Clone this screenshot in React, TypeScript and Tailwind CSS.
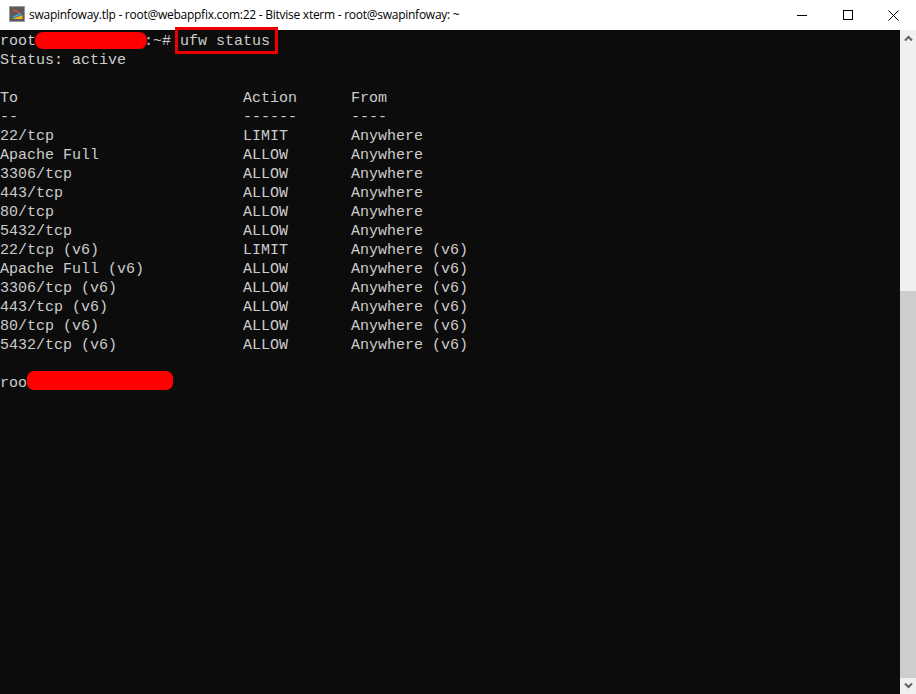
import React from 'react';

const rows: [string, string, string][] = [
  ['22/tcp', 'LIMIT', 'Anywhere'],
  ['Apache Full', 'ALLOW', 'Anywhere'],
  ['3306/tcp', 'ALLOW', 'Anywhere'],
  ['443/tcp', 'ALLOW', 'Anywhere'],
  ['80/tcp', 'ALLOW', 'Anywhere'],
  ['5432/tcp', 'ALLOW', 'Anywhere'],
  ['22/tcp (v6)', 'LIMIT', 'Anywhere (v6)'],
  ['Apache Full (v6)', 'ALLOW', 'Anywhere (v6)'],
  ['3306/tcp (v6)', 'ALLOW', 'Anywhere (v6)'],
  ['443/tcp (v6)', 'ALLOW', 'Anywhere (v6)'],
  ['80/tcp (v6)', 'ALLOW', 'Anywhere (v6)'],
  ['5432/tcp (v6)', 'ALLOW', 'Anywhere (v6)'],
];

const Line: React.FC<{ children?: React.ReactNode }> = ({ children }) => (
  <div className="h-[19px] whitespace-pre">{children}</div>
);

const Row: React.FC<{ to: string; action: string; from: string }> = ({ to, action, from }) => (
  <div className="flex h-[19px] whitespace-pre">
    <span className="w-[243px]">{to}</span>
    <span className="w-[108px]">{action}</span>
    <span>{from}</span>
  </div>
);

const AppIcon = () => (
  <svg width="16" height="16" viewBox="0 0 16 16">
    <rect width="16" height="16" fill="#9a9a9a" />
    <rect x="1" y="1" width="14" height="14" fill="#5c5c5c" />
    <path d="M3 3 10 5.5 12 7.5 5 5.5z" fill="#e8483a" />
    <path d="M11 7 12.5 8 6 11.5H2.5z" fill="#2fb4f0" />
    <path d="M7 11.5 13.5 9V13H3.5z" fill="#f5b21a" />
  </svg>
);

export default function App() {
  return (
    <div className="w-[916px] h-[694px] flex flex-col bg-white overflow-hidden">
      {/* title bar */}
      <div className="h-[30px] flex items-center shrink-0">
        <div className="pl-[9px] pr-[4px] -mt-[2px]">
          <AppIcon />
        </div>
        <span className="flex-1 -mt-[1px] text-[12px] text-black whitespace-pre font-['Open_Sans',sans-serif] tracking-[-0.26px]">
          swapinfoway.tlp - root@webappfix.com:22 - Bitvise xterm - root@swapinfoway: ~
        </span>
        <div className="flex items-center text-black">
          <div className="w-[46px] h-[30px] flex items-center justify-center">
            <div className="w-[10px] h-px bg-black" />
          </div>
          <div className="w-[45px] h-[30px] flex items-center justify-center">
            <div className="w-[10px] h-[10px] border border-black" />
          </div>
          <div className="w-[46px] h-[30px] flex items-center justify-center">
            <svg width="11" height="11" viewBox="0 0 11 11" stroke="black" strokeWidth="1">
              <path d="M0.5 0.5 10.5 10.5M10.5 0.5 0.5 10.5" />
            </svg>
          </div>
        </div>
      </div>

      <div className="flex-1 flex min-h-0">
        {/* terminal */}
        <div className="relative flex-1 bg-[#0c0c0c] pt-[2px] text-[15px] leading-[19px] text-[#cccccc] font-['Liberation_Mono',monospace]">
          <Line>{'root            :~# ufw status'}</Line>
          <Line>Status: active</Line>
          <Line />
          <Row to="To" action="Action" from="From" />
          <Row to="--" action="------" from="----" />
          {rows.map(([to, action, from]) => (
            <Row key={to} to={to} action={action} from={from} />
          ))}
          <Line />
          <Line>roo</Line>

          {/* annotations painted over the screenshot */}
          <div className="absolute left-[35px] top-[2px] w-[112px] h-[17px] rounded-[8px] bg-[#ff0000]" />
          <div className="absolute left-[175px] top-[-3px] w-[103px] h-[27px] border-[3px] border-[#ee0000]" />
          <div className="absolute left-[27px] top-[341px] w-[146px] h-[19px] rounded-[7px] bg-[#ff0000]" />
        </div>

        {/* scrollbar */}
        <div className="w-[16px] flex flex-col bg-[#f0f0f0]">
          <div className="h-[16px] flex items-center justify-center">
            <svg width="9" height="6" viewBox="0 0 9 6" fill="none" stroke="#606060" strokeWidth="2">
              <path d="M1 5.5 4.5 2 8 5.5" />
            </svg>
          </div>
          <div className="h-[245px]" />
          <div className="flex-1 bg-[#cdcdcd]" />
          <div className="h-[16px] flex items-center justify-center">
            <svg width="9" height="6" viewBox="0 0 9 6" fill="none" stroke="#606060" strokeWidth="2">
              <path d="M1 0.5 4.5 4 8 0.5" />
            </svg>
          </div>
        </div>
      </div>
    </div>
  );
}
